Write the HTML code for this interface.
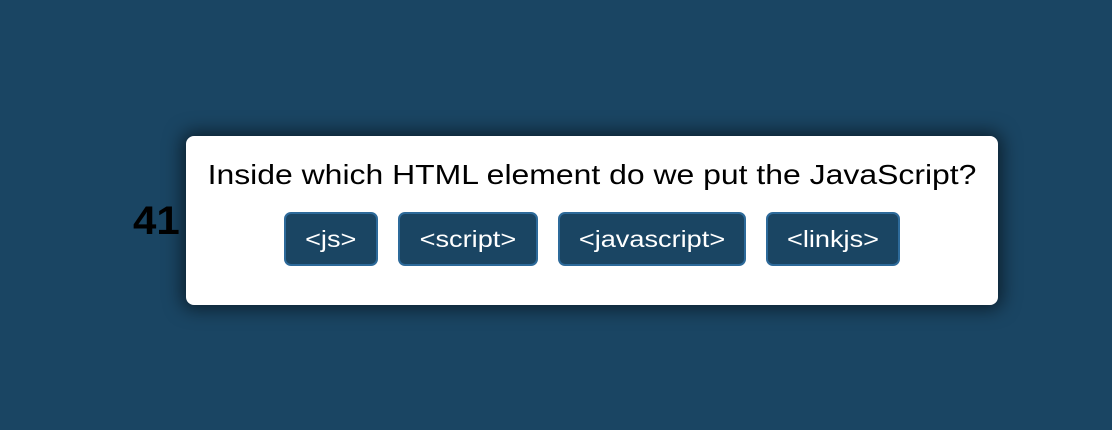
<!DOCTYPE html>
<html><head><style>
html,body{margin:0;padding:0;width:1112px;height:430px;background:#1a4563;overflow:hidden;font-family:"Liberation Sans",Arial,sans-serif}
.num{position:absolute;left:133px;top:199px;font-size:40px;font-weight:bold;color:#000;line-height:44px;transform:scaleX(1.05);transform-origin:left}
.card{position:absolute;left:186px;top:136px;width:812px;height:169px;background:#fff;border-radius:8px;box-shadow:0 0 18px 4px rgba(0,0,0,0.55)}
.q{position:absolute;left:186px;width:812px;top:159px;text-align:center;font-size:28px;color:#000;line-height:32px;transform:scaleX(1.14);transform-origin:center}
.b{position:absolute;top:212px;height:54px;box-sizing:border-box;background:#1a4563;border:2px solid #2d6a9a;border-radius:7px;color:#fff;display:flex;align-items:center;justify-content:center}
.b span{font-size:23px;display:inline-block;transform:scaleX(1.18)}
</style></head><body>
<div class="num">41</div>
<div class="card"></div>
<div class="q">Inside which HTML element do we put the JavaScript?</div>
<div class="b" style="left:284px;width:94px"><span>&lt;js&gt;</span></div>
<div class="b" style="left:398px;width:140px"><span>&lt;script&gt;</span></div>
<div class="b" style="left:558px;width:188px"><span>&lt;javascript&gt;</span></div>
<div class="b" style="left:766px;width:134px"><span>&lt;linkjs&gt;</span></div>
</body></html>
